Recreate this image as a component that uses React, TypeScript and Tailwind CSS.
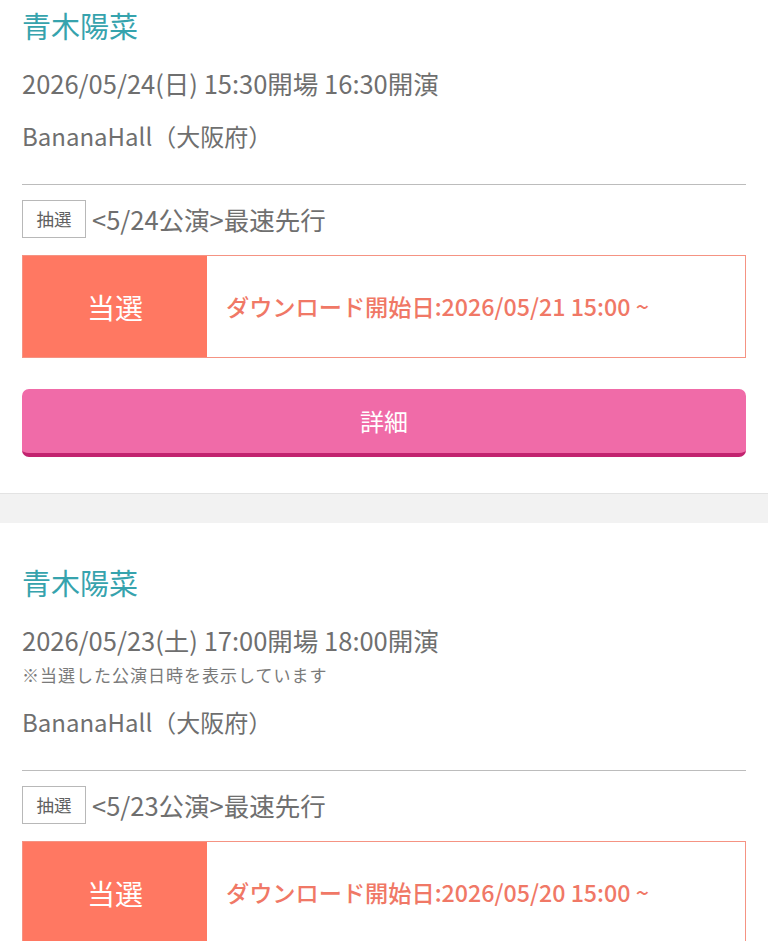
const tickets = [
  {
    name: '青木陽菜',
    date: '2026/05/24(日) 15:30開場 16:30開演',
    note: '',
    venue: 'BananaHall（大阪府）',
    kind: '抽選',
    title: '<5/24公演>最速先行',
    status: '当選',
    download: 'ダウンロード開始日:2026/05/21 15:00 ~',
  },
  {
    name: '青木陽菜',
    date: '2026/05/23(土) 17:00開場 18:00開演',
    note: '※当選した公演日時を表示しています',
    venue: 'BananaHall（大阪府）',
    kind: '抽選',
    title: '<5/23公演>最速先行',
    status: '当選',
    download: 'ダウンロード開始日:2026/05/20 15:00 ~',
  },
];

type Ticket = (typeof tickets)[number];

function TicketCard({ t }: { t: Ticket }) {
  return (
    <section className="bg-white px-[22px] pt-[39px] pb-[36px]">
      <h2 className="text-[29px] leading-[40px] text-[#36a3ad]">{t.name}</h2>
      <p className="mt-[24px] text-[25.5px] leading-[28px] text-[#6f6f6f]">{t.date}</p>
      {t.note && (
        <p className="mt-[11px] text-[17px] leading-[20px] tracking-[1px] text-[#7a7a7a]">{t.note}</p>
      )}
      <p className={`${t.note ? 'mt-[23px]' : 'mt-[25px]'} text-[24px] leading-[28px] text-[#6f6f6f]`}>
        {t.venue}
      </p>

      <div className="mt-[34px] h-px bg-[#bcbcbc]" />

      <div className="mt-[15px] flex items-center gap-[6px]">
        <span className="flex h-[38px] w-[64px] items-center justify-center border border-[#b8b8b8] text-[17.5px] text-[#606060]">
          {t.kind}
        </span>
        <span className="text-[25.5px] leading-[28px] text-[#6f6f6f]">{t.title}</span>
      </div>

      <div className="mt-[17px] flex h-[103px] border border-[#f59383]">
        <div className="flex w-[184px] shrink-0 items-center justify-center bg-[#ff7862] text-[28px] text-white">
          {t.status}
        </div>
        <div className="flex items-center pl-[19px] text-[23.2px] font-medium text-[#f07866]">
          {t.download}
        </div>
      </div>

      <button className="mt-[31px] flex h-[68px] w-full items-center justify-center rounded-[7px] border-b-[4px] border-[#c2236f] bg-[#f06ba8] text-[24px] text-white">
        詳細
      </button>
    </section>
  );
}

export default function App() {
  return (
    <div
      className="min-h-screen bg-white -mt-[34px]"
      style={{ fontFamily: '"Noto Sans CJK JP", "Noto Sans", sans-serif' }}
    >
      {tickets.map((t, i) => (
        <div key={i}>
          <TicketCard t={t} />
          {i < tickets.length - 1 && (
            <div className="h-[30px] border-t border-[#e3e3e3] bg-[#f2f2f2]" />
          )}
        </div>
      ))}
    </div>
  );
}
